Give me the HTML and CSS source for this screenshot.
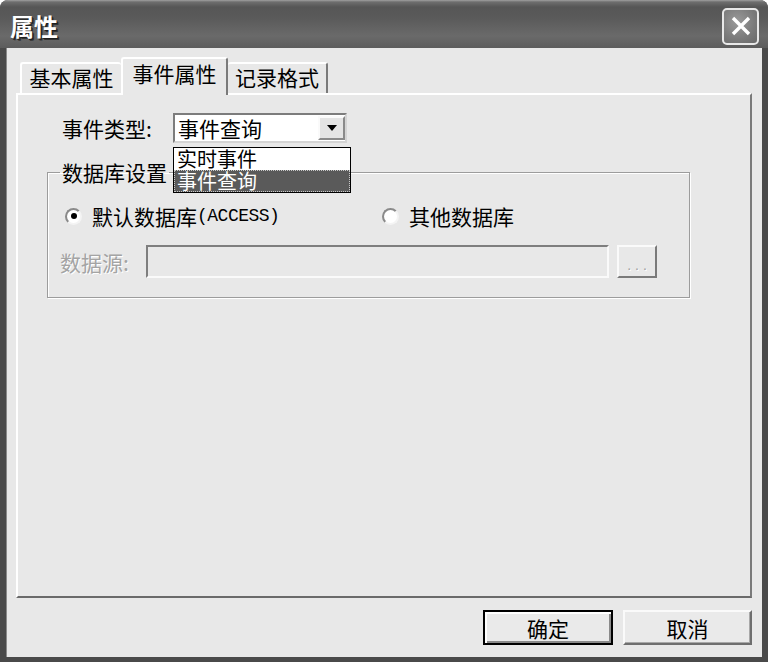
FILE: index.html
```html
<!DOCTYPE html>
<html lang="zh-CN">
<head>
<meta charset="utf-8">
<title>属性</title>
<link rel="stylesheet" href="styles.css">
</head>
<body>
<div class="window">
  <div class="titlebar">
    <span class="title">属性</span>
    <div class="close" aria-label="关闭">
      <svg width="22" height="22" viewBox="0 0 22 22"><path d="M3 3 L19 19 M19 3 L3 19" stroke="#fff" stroke-width="3.4" fill="none"/></svg>
    </div>
  </div>
  <div class="client">
    <div class="tabs">
      <div class="tab t1">基本属性</div>
      <div class="tab active">事件属性</div>
      <div class="tab t3">记录格式</div>
    </div>
    <div class="panel">
      <div class="row-type">
        <span class="lbl-type">事件类型:</span>
        <div class="combo">
          <span class="combo-text">事件查询</span>
          <span class="combo-btn"><svg width="10" height="6" viewBox="0 0 10 6"><path d="M0 0 H10 L5 6 Z" fill="#000"/></svg></span>
          <div class="dropdown">
            <div class="opt">实时事件</div>
            <div class="opt sel">事件查询</div>
          </div>
        </div>
      </div>
      <fieldset class="group">
        <legend>数据库设置</legend>
        <div class="radios">
          <div class="radio r1"><span class="dot checked"></span>默认数据库<span class="latin">(ACCESS)</span></div>
          <div class="radio"><span class="dot"></span>其他数据库</div>
        </div>
        <div class="src-row">
          <span class="lbl-src">数据源:</span>
          <div class="field"></div>
          <div class="browse">...</div>
        </div>
      </fieldset>
    </div>
    <div class="buttons">
      <div class="btn default">确定</div>
      <div class="btn cancel">取消</div>
    </div>
  </div>
</div>
</body>
</html>
```

FILE: styles.css
```css
* { box-sizing: border-box; }
html, body { margin: 0; padding: 0; background: #ffffff; }
body {
  font-family: "Noto Sans CJK SC", "Noto Sans", sans-serif;
  font-size: 21px;
  color: #000;
}
.window {
  width: 768px;
  height: 662px;
  display: flex;
  flex-direction: column;
  background: #4a4a4a;
  border-radius: 8px 8px 0 0;
  overflow: hidden;
}
.titlebar {
  height: 48px;
  flex: none;
  display: flex;
  align-items: center;
  justify-content: space-between;
  padding: 4px 9px 0 10px;
  background: linear-gradient(to bottom, #a0a0a0 0, #6e6e6e 2px, #565656 7px, #5a5a5a 18px, #6a6a6a 36px, #5c5c5c 48px);
}
.title {
  font-size: 24px;
  font-weight: 700;
  color: #fff;
  line-height: 28px;
  text-shadow: 1px 1px 0 #1e1e1e, 2px 2px 0 #333;
}
.close {
  width: 37px;
  height: 37px;
  border: 2px solid #e8e8e8;
  border-radius: 5px;
  background: radial-gradient(circle at 40% 35%, #9a9a9a 0, #7a7a7a 60%, #6a6a6a 100%);
  display: flex;
  align-items: center;
  justify-content: center;
}
.client {
  flex: 1;
  margin: 0 6px 5px 6px;
  background: #e8e8e8;
  padding: 9px 10px 12px 10px;
  display: flex;
  flex-direction: column;
  box-shadow: inset 1px 0 0 #8a8a8a;
}
.tabs {
  display: flex;
  align-items: flex-end;
  height: 38px;
  margin-bottom: -2px;
  padding-left: 4px;
  position: relative;
  z-index: 1;
}
.tab {
  height: 31px;
  margin-bottom: 2px;
  background: #e8e8e8;
  border-top: 2px solid #fff;
  border-left: 2px solid #fff;
  border-right: 2px solid #7a7a7a;
  border-radius: 3px 3px 0 0;
  display: flex;
  align-items: center;
  justify-content: center;
  line-height: 22px;
  padding-bottom: 3px;
}
.tab.t1 { width: 101px; border-right: none; }
.tab.active {
  width: 107px;
  height: 38px;
  margin-bottom: 0;
  padding-bottom: 8px;
}
.tab.t3 { width: 100px; border-left: none; }
.panel {
  flex: 1;
  border-top: 2px solid #fff;
  border-left: 2px solid #fff;
  border-right: 2px solid #7a7a7a;
  border-bottom: 2px solid #6a6a6a;
  padding: 18px 0 0 29px;
}
.row-type {
  display: flex;
  align-items: center;
  height: 30px;
  margin-left: 15px;
}
.lbl-type { width: 111px; line-height: 22px; }
.combo {
  position: relative;
  width: 174px;
  height: 30px;
  border: 2px solid;
  border-color: #7c7c7c #d4d4d4 #d4d4d4 #7c7c7c;
  background: #fff;
  display: flex;
  align-items: center;
}
.combo-text { flex: 1; padding-left: 3px; line-height: 22px; }
.combo-btn {
  width: 27px;
  height: 24px;
  background: #e4e4e4;
  border: 2px solid;
  border-color: #fafafa #8a8a8a #8a8a8a #fafafa;
  display: flex;
  align-items: center;
  justify-content: center;
}
.dropdown {
  position: absolute;
  left: -2px;
  top: 32px;
  width: 178px;
  border: 1px solid #000;
  background: #fff;
  z-index: 5;
}
.opt {
  height: 22px;
  line-height: 22px;
  font-size: 20px;
  padding-left: 3px;
}
.opt.sel {
  background: #5a5a5a;
  color: #fff;
  outline: 1px dotted #c8c8c8;
  outline-offset: -1px;
}
.group {
  margin: 18px 0 0 0;
  width: 643px;
  padding: 0 0 19px 0;
  border: 1px solid #9c9c9c;
  box-shadow: 1px 1px 0 #fff, inset 1px 1px 0 #fff;
}
.group legend {
  margin-left: 12px;
  padding: 0 2px;
  line-height: 22px;
}
.radios {
  display: flex;
  align-items: center;
  height: 22px;
  margin-top: 22px;
  padding-left: 17px;
}
.radio { display: flex; align-items: center; line-height: 22px; }
.radio.r1 { width: 317px; }
.dot {
  width: 17px;
  height: 17px;
  border-radius: 50%;
  border: 2px solid;
  border-color: #8a8a8a #f4f4f4 #f4f4f4 #8a8a8a;
  background: #fff;
  margin-right: 10px;
  display: flex;
  align-items: center;
  justify-content: center;
}
.dot.checked::after {
  content: "";
  width: 6px;
  height: 6px;
  border-radius: 50%;
  background: #000;
}
.latin {
  font-family: "Liberation Mono", "DejaVu Sans Mono", monospace;
  font-size: 18px;
  letter-spacing: -0.5px;
}
.src-row {
  display: flex;
  align-items: center;
  margin-top: 18px;
  padding-left: 12px;
}
.lbl-src {
  width: 86px;
  color: #a4a4a4;
  text-shadow: 1px 1px 0 #fff;
  line-height: 22px;
}
.field {
  width: 463px;
  height: 33px;
  border: 2px solid;
  border-color: #7e7e7e #fafafa #fafafa #7e7e7e;
  background: #e8e8e8;
}
.browse {
  margin-left: 8px;
  width: 40px;
  height: 33px;
  border: 2px solid;
  border-color: #fafafa #7a7a7a #7a7a7a #fafafa;
  background: #e8e8e8;
  color: #a0a0a0;
  font-family: "Liberation Sans", sans-serif;
  font-size: 14px;
  letter-spacing: 4px;
  text-shadow: 1px 1px 0 #fff;
  display: flex;
  align-items: center;
  justify-content: center;
  padding-left: 4px;
  padding-top: 6px;
}
.buttons {
  display: flex;
  justify-content: flex-end;
  gap: 10px;
  margin-top: 12px;
  height: 35px;
  flex: none;
}
.btn {
  height: 35px;
  display: flex;
  align-items: center;
  justify-content: center;
  background: #eaeaea;
  line-height: 22px;
}
.btn.default {
  width: 130px;
  border: 2px solid #000;
  box-shadow: inset 2px 2px 0 #fff, inset -2px -2px 0 #8a8a8a;
}
.btn.cancel {
  width: 129px;
  border: 2px solid;
  border-color: #fafafa #6e6e6e #6e6e6e #fafafa;
  box-shadow: inset -1px -1px 0 #a8a8a8;
}
```
